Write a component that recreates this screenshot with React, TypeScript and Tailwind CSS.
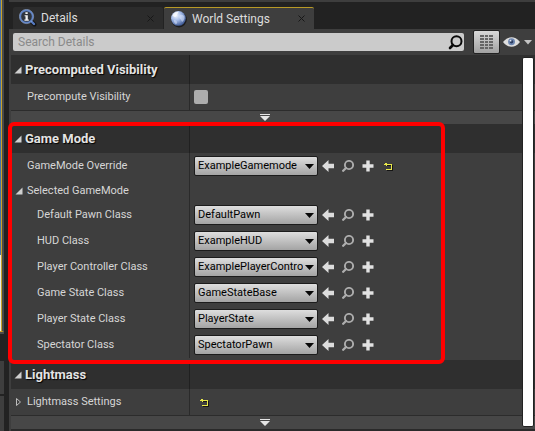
import React, { useState } from "react";

type ClassRow = { label: string; value: string };

const classRows: ClassRow[] = [
  { label: "Default Pawn Class", value: "DefaultPawn" },
  { label: "HUD Class", value: "ExampleHUD" },
  { label: "Player Controller Class", value: "ExamplePlayerController" },
  { label: "Game State Class", value: "GameStateBase" },
  { label: "Player State Class", value: "PlayerState" },
  { label: "Spectator Class", value: "SpectatorPawn" },
];

function InfoIcon() {
  return (
    <svg width="18" height="18" viewBox="0 0 18 18" className="shrink-0">
      <path d="M11.5 11.5 15.5 15.5" stroke="#111" strokeWidth="4" strokeLinecap="round" />
      <path d="M11.5 11.5 15 15" stroke="#5579c0" strokeWidth="2.4" strokeLinecap="round" />
      <circle cx="7.5" cy="7.5" r="6.2" fill="#30353d" stroke="#5c80c4" strokeWidth="1.7" />
      <circle cx="7.5" cy="7.5" r="7.1" fill="none" stroke="#a9c0ea" strokeWidth="0.5" />
      <path d="M6.4 3.2h2.3v1.9H6.4zM5.6 6.2h3.2v4.4h1v1.2H5.4v-1.2h1.1V7.3h-.9z" fill="#f2f2f2" />
    </svg>
  );
}

function GlobeIcon() {
  return (
    <svg width="18" height="18" viewBox="0 0 18 18" className="shrink-0">
      <defs>
        <radialGradient id="globe" cx="0.35" cy="0.3" r="0.75">
          <stop offset="0" stopColor="#f2f6ff" />
          <stop offset="0.45" stopColor="#a5bce8" />
          <stop offset="1" stopColor="#39548f" />
        </radialGradient>
      </defs>
      <circle cx="9" cy="9.6" r="7.8" fill="#1c1c1c" />
      <circle cx="8.4" cy="8.4" r="7.4" fill="url(#globe)" />
      <path d="M2.5 5.2C4 2.6 6.4 1.6 8.6 1.8 8.2 3.6 6.8 4.2 6.4 6 5.6 7.4 3.6 7.2 2.5 5.2z" fill="#fff" opacity="0.75" />
      <path d="M9.6 5.2c2-.8 3.8-.2 4.9 1.2.4 2.6-.8 4.4-2.3 5.6-1-.8-.8-2-1.8-3-1-.6-1.6-2.4-.8-3.8z" fill="#dbe6fb" opacity="0.55" />
      <path d="M4 10c1.600.2 3 1 3.200 2.400-.2 1-.8 1.600-1.400 1.800C4.200 13 3.600 11.600 4 10z" fill="#dbe6fb" opacity="0.5" />
    </svg>
  );
}

function ArrowIcon() {
  return (
    <svg width="12" height="12" viewBox="0 0 12 12">
      <path d="M0 6 6.500 0v3.800H12v4.400H6.500V12z" fill="#dcdcdc" />
    </svg>
  );
}

function LensIcon() {
  return (
    <svg width="12" height="12" viewBox="0 0 12 12">
      <circle cx="7" cy="5" r="4.100" fill="none" stroke="#adadad" strokeWidth="1.900" />
      <path d="M4 8 1.200 10.800" stroke="#adadad" strokeWidth="2.300" strokeLinecap="round" />
    </svg>
  );
}

function PlusIcon() {
  return (
    <svg width="12" height="12" viewBox="0 0 12 12">
      <path d="M4.300.5h3.400v3.800h3.800v3.400H7.700v3.800H4.300V7.700H.5V4.300h3.800z" fill="#e2e2e2" />
    </svg>
  );
}

function ResetButton() {
  return (
    <button type="button" aria-label="Reset to default" className="flex size-3 items-center justify-center">
      <svg width="9" height="9" viewBox="0 0 9 9" shapeRendering="crispEdges">
        <path d="M2 3.500h6V8.500H3" fill="none" stroke="#151515" />
        <path d="M1 2.500h6V7.500H2" fill="none" stroke="#e8e84a" />
        <path d="M0 2h1v1H0zM1 1h2v3H2V3H1z" fill="#e8e84a" />
      </svg>
    </button>
  );
}

function Expander({ open }: { open: boolean }) {
  return (
    <svg width="8" height="8" viewBox="0 0 8 8" className="shrink-0">
      {open ? <path d="M7.500 0.500v7h-7z" fill="#cfcfcf" /> : <path d="M1.500.5v7L5.500 4z" fill="none" stroke="#bdbdbd" />}
    </svg>
  );
}

function SectionHeader({ title }: { title: string }) {
  return (
    <h2 className="flex h-[29px] bg-[#2f2f2f] text-[13px] font-bold text-[#e4e4e4]">
      <button type="button" className="flex w-[179px] shrink-0 items-center gap-[3px] border-r border-[#202020] pl-[3px]">
        <Expander open />
        <span className="whitespace-nowrap [text-shadow:1px_1px_1px_#000]">{title}</span>
      </button>
    </h2>
  );
}

function Row({ label, indent, children }: { label: React.ReactNode; indent?: string; children?: React.ReactNode }) {
  return (
    <div className="flex h-[26px]">
      <div className={`flex w-[179px] shrink-0 items-center border-r border-[#2a2a2a] ${indent ?? "pl-4"}`}>{label}</div>
      <div className="flex min-w-0 flex-1 items-center pl-1">{children}</div>
    </div>
  );
}

function ClassPicker({ id, value, modified }: { id: string; value: string; modified?: boolean }) {
  return (
    <div className="flex items-center gap-2">
      <div className="relative -mr-1 h-5 w-[124px]">
        <select
          id={id}
          className="h-5 w-full appearance-none overflow-hidden rounded-xs border border-[#1c1c1c] bg-linear-to-b from-[#dedede] to-[#a4a4a4] pr-[14px] pl-[3px] text-[11px] text-clip text-black"
        >
          <option>{value}</option>
        </select>
        <svg width="9" height="5" viewBox="0 0 9 5" className="pointer-events-none absolute top-2 right-[4px]">
          <path d="M0 0h9L4.500 5z" fill="#080808" />
        </svg>
      </div>
      <button type="button" aria-label="Use selected" className="size-3"><ArrowIcon /></button>
      <button type="button" aria-label="Browse" className="size-3"><LensIcon /></button>
      <button type="button" aria-label="Create new" className="size-3"><PlusIcon /></button>
      {modified && <ResetButton />}
    </div>
  );
}

function AdvancedBar() {
  return (
    <button type="button" aria-label="Show advanced" className="flex h-[14px] w-full items-center justify-center border-t border-[#2c2c2c] bg-[#474747] pr-4">
      <svg width="10" height="7" viewBox="0 0 10 7">
        <path d="M0 0h10v1H0zM0 2h10L5 7z" fill="#e6e6e6" />
      </svg>
    </button>
  );
}

function CloseButton() {
  return (
    <button type="button" aria-label="Close tab" className="ml-auto">
      <svg width="7" height="7" viewBox="0 0 7 7">
        <path d="M.5.5l6 6M6.500.5l-6 6" stroke="#171717" strokeWidth="1" />
      </svg>
    </button>
  );
}

export default function App() {
  const [query, setQuery] = useState("");
  return (
    <div className="flex min-h-screen bg-[#222222] font-['Roboto','Liberation_Sans',sans-serif] text-[11px] leading-4 text-[#d6d6d6]">
      <div className="flex w-1 shrink-0 flex-col">
        <div className="h-[255px] border-r-2 border-[#4a4a4a] bg-[#4470a8]">
          <div className="ml-px h-full bg-[#c9a227]" />
        </div>
        <div className="h-[77px] border-r-2 border-b border-r-[#4a4a4a] border-b-[#c9a227] bg-[#e8e8e8]">
          <div className="ml-px h-full bg-[#c9a227]" />
        </div>
        <div className="h-[2px] bg-[#4a4a4a]" />
        <div className="h-[27px]" />
        <div className="h-[35px] border-b-2 border-[#222222] bg-[#3e3e3e]" />
        <div className="flex-1 bg-[#3e3e3e]" />
      </div>

      <main className="ml-[5px] min-w-0 flex-1 border-t-2 border-[#3e3e3e]">
        <div role="tablist" className="flex h-[27px] items-end gap-px pl-1 text-[12px] text-[#dcdcdc] [text-shadow:1px_1px_1px_#000]">
          <div className="flex h-[22px] w-[150px] items-center gap-1 rounded-t-xs bg-[#2c2c2c] pr-[9px] pl-[6px]">
            <InfoIcon />
            <button type="button" role="tab">Details</button>
            <CloseButton />
          </div>
          <div className="flex h-[22px] w-[150px] items-center gap-1 rounded-t-xs border-t border-[#b89a26] bg-[#3e3e3e] pr-[9px] pl-[6px]">
            <GlobeIcon />
            <button type="button" role="tab" aria-selected="true">World Settings</button>
            <CloseButton />
          </div>
        </div>

        <div className="bg-[#3e3e3e] pl-[2px]">
          <div className="flex h-[26px] items-center pr-[3px] pl-[2px]">
            <label className="flex h-[18px] min-w-0 flex-1 items-center rounded-xs bg-[#cbcbcb] pr-px pl-[5px]">
              <input
                type="text"
                aria-label="Search Details"
                placeholder="Search Details"
                value={query}
                onChange={(e) => setQuery(e.target.value)}
                className="min-w-0 flex-1 bg-transparent text-[12px] text-black outline-none placeholder:text-[#8a8a8a]"
              />
              <svg width="15" height="15" viewBox="0 0 15 15">
                <circle cx="8.500" cy="6.200" r="5" fill="none" stroke="#0a0a0a" strokeWidth="2" />
                <path d="M5 10 2 13" stroke="#0a0a0a" strokeWidth="2.600" strokeLinecap="round" />
              </svg>
            </label>
            <button type="button" aria-label="Property matrix" className="ml-[9px] flex h-6 w-[27px] items-center justify-center rounded-xs border border-[#222222] bg-linear-to-b from-[#d8d8d8] to-[#a2a2a2]">
              <svg width="13" height="14" viewBox="0 0 13 14" shapeRendering="crispEdges">
                <path d="M0 1h13M0 4h13M0 7h13M0 10h13M0 13h13" stroke="#666" strokeWidth="2" strokeDasharray="4 1 3 1 4 0" />
              </svg>
            </button>
            <button type="button" aria-label="View options" className="ml-[3px] flex items-center gap-1">
              <svg width="17" height="12" viewBox="0 0 18 12">
                <path d="M0 6C3 2 6 1 9 1s6 1 9 5c-3 4-6 5-9 5S3 10 0 6z" fill="#dedede" />
                <circle cx="9" cy="5.800" r="3.700" fill="#6d86b0" />
                <circle cx="9" cy="5.800" r="1.900" fill="#2a3c60" />
                <circle cx="8" cy="4.600" r="1" fill="#dfe8f8" />
              </svg>
              <svg width="8" height="5" viewBox="0 0 8 5">
                <path d="M0 0h8L4 4.500z" fill="#c4c4c4" />
              </svg>
            </button>
          </div>

          <div className="relative">
            <section>
              <SectionHeader title="Precomputed Visibility" />
              <Row label={<label htmlFor="precompute">Precompute Visibility</label>}>
                <input id="precompute" type="checkbox" className="size-[14px] appearance-none rounded-xs bg-[#adadad] checked:bg-[#e8e8e8]" />
              </Row>
              <AdvancedBar />
            </section>

            <section className="relative w-full pb-[2px]">
              <SectionHeader title="Game Mode" />
              <Row label={<label htmlFor="override">GameMode Override</label>}>
                <ClassPicker id="override" value="ExampleGamemode" modified />
              </Row>
              <div className="flex h-[23px]">
                <button type="button" className="flex w-[179px] items-center gap-1 border-r border-[#2a2a2a] pl-1">
                  <Expander open />
                  Selected GameMode
                </button>
              </div>
              {classRows.map((row) => (
                <Row key={row.label} indent="pl-[26px]" label={<label htmlFor={row.label.replaceAll(" ", "-")}>{row.label}</label>}>
                  <ClassPicker id={row.label.replaceAll(" ", "-")} value={row.value} />
                </Row>
              ))}
              <div className="pointer-events-none absolute -top-[2px] -bottom-1 -left-[3px] w-[437px] rounded-md border-4 border-[#ff0000]" />
            </section>

            <section className="border-b-2 border-[#2a2a2a]">
              <SectionHeader title="Lightmass" />
              <Row
                indent="pl-1"
                label={
                  <button type="button" className="flex items-center gap-1">
                    <Expander open={false} />
                    Lightmass Settings
                  </button>
                }
              >
                <div className="pl-1"><ResetButton /></div>
              </Row>
              <AdvancedBar />
            </section>

            <div role="scrollbar" aria-controls="root" aria-valuenow={0} className="absolute top-[2px] right-px bottom-1 w-3 rounded-xs border border-[#222222] bg-white" />
          </div>
        </div>
      </main>
    </div>
  );
}
